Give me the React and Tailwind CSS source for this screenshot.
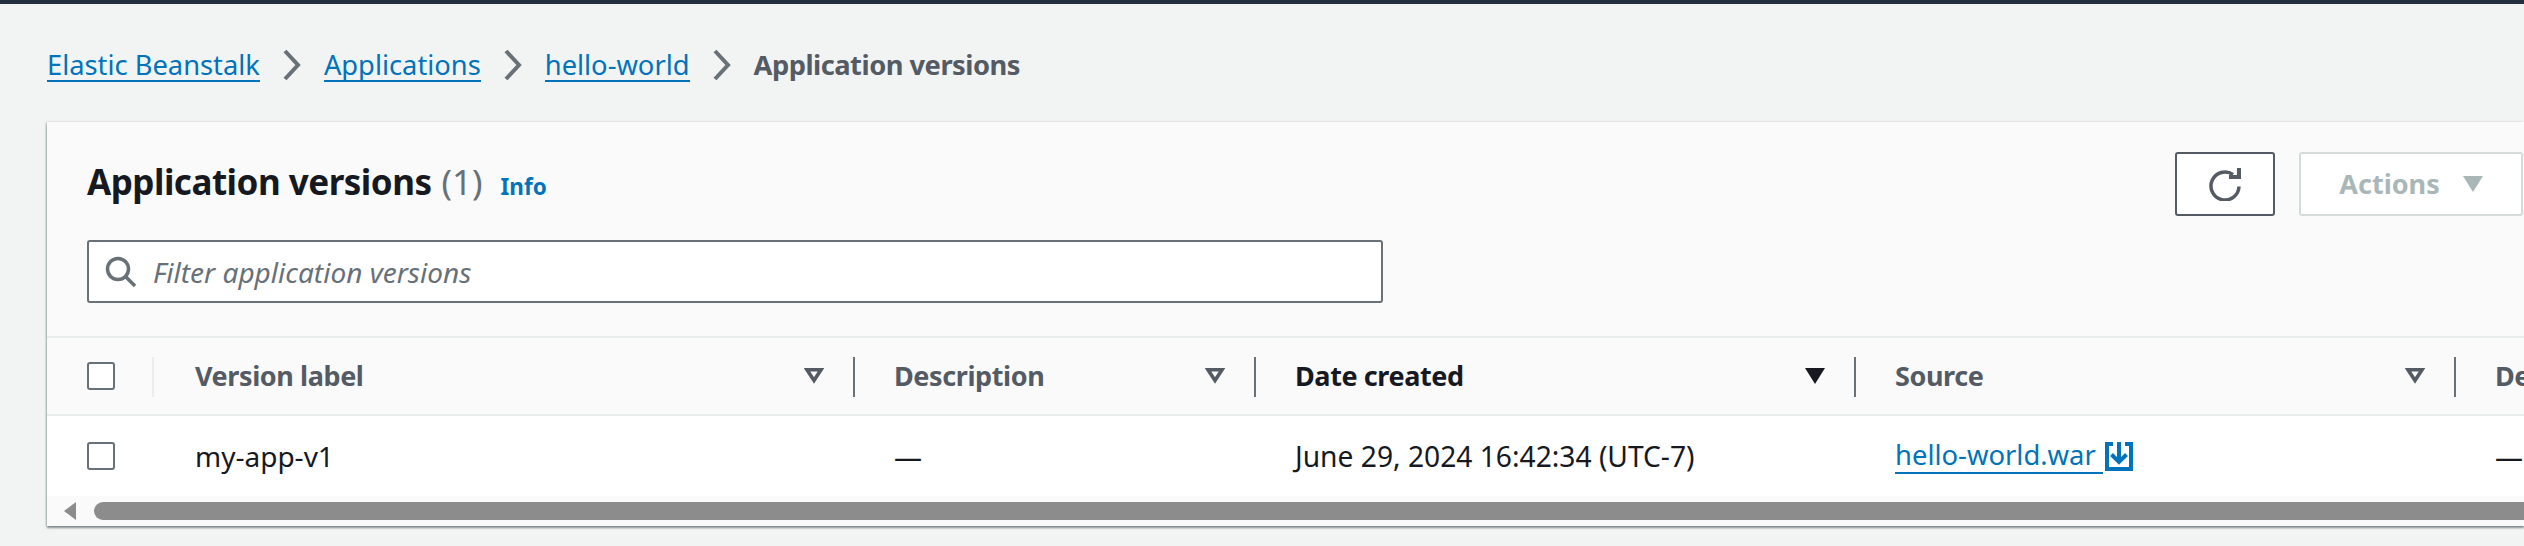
import React from 'react';

const FONT = 'font-["Noto_Sans",sans-serif]';

function Chevron() {
  return (
    <svg width="20" height="32" viewBox="0 0 20 32" fill="none" className="shrink-0">
      <path d="M3 2l13 14L3 30" stroke="#687078" strokeWidth="4" />
    </svg>
  );
}

function Crumb({ children }) {
  return (
    <a className="text-[#0073bb] border-b-2 border-[#0073bb] leading-[31px] h-[33px] block">{children}</a>
  );
}

function FilterIcon({ active }) {
  return (
    <svg width="20" height="16" viewBox="0 0 20 16" className="shrink-0">
      {active ? (
        <path d="M0 0h20L10 16z" fill="#16191f" />
      ) : (
        <path d="M3 1.8h14L10 12.5z" fill="none" stroke="#545b64" strokeWidth="3.6" />
      )}
    </svg>
  );
}

function Checkbox() {
  return <div className="w-[28px] h-[28px] rounded-[3px] border-2 border-[#687078] bg-white" />;
}

function HeadCell({ label, active }) {
  return (
    <div className="relative flex items-center h-full pl-[41px] pr-[29px] justify-between">
      <div className="absolute left-0 top-[19px] h-[40px] w-[2px] bg-[#687078]" />
      <span className={`font-bold text-[27px] tracking-[-0.4px] whitespace-nowrap ${active ? 'text-[#16191f]' : 'text-[#545b64]'}`}>{label}</span>
      <FilterIcon active={active} />
    </div>
  );
}

export default function App() {
  return (
    <div className={`w-[2524px] h-[546px] overflow-hidden bg-[#f2f3f3] border-t-4 border-[#232f3e] ${FONT}`}>
      {/* Breadcrumbs */}
      <nav className="h-[118px] pl-[47px] pt-[45px] flex items-start gap-[22px] text-[27.3px]">
        <Crumb>Elastic Beanstalk</Crumb>
        <Chevron />
        <Crumb>Applications</Crumb>
        <Chevron />
        <Crumb>hello-world</Crumb>
        <Chevron />
        <span className="text-[#545b64] font-bold tracking-[-0.5px] leading-[31px]">Application versions</span>
      </nav>

      <div className="ml-[47px] h-[404px] bg-[#fafafa] shadow-[0_2px_2px_rgba(0,28,36,0.45),-1px_0_2px_rgba(0,28,36,0.2)] overflow-hidden">
        {/* Header */}
        <div className="h-[214px] pl-[40px] relative">
          <div className="flex items-start justify-between pt-[30px] pr-[1px]">
            <div className="flex items-baseline gap-[10px] pt-[8px]">
              <h1 className="text-[35px] font-bold tracking-[-0.5px] text-[#16191f] leading-[44px]">Application versions</h1>
              <span className="text-[35px] text-[#687078] leading-[44px]">(1)</span>
              <a className="ml-[8px] text-[22.5px] font-bold text-[#0073bb]">Info</a>
            </div>
            <div className="flex gap-[24px]">
              <button className="w-[100px] h-[64px] rounded-[3px] border-2 border-[#545b64] bg-white flex items-center justify-center">
                <svg width="32" height="33" viewBox="0 0 32 33" fill="none">
                  <path d="M24 6.5A14 14 0 1 0 30 18.5" stroke="#545b64" strokeWidth="3.5" />
                  <path d="M28 0h4v11H20V7h8z" fill="#545b64" />
                </svg>
              </button>
              <button className="w-[224px] h-[64px] rounded-[3px] border-2 border-[#d5dbdb] bg-white flex items-center justify-center gap-[23px] text-[27px] font-bold text-[#aab7b8]">
                Actions
                <svg width="20" height="16" viewBox="0 0 20 16"><path d="M0 0h20L10 16z" fill="#aab7b8" /></svg>
              </button>
            </div>
          </div>
          <div className="mt-[24px] w-[1296px] h-[63px] rounded-[3px] border-2 border-[#687078] bg-white flex items-center pl-[16px] gap-[16px]">
            <svg width="32" height="32" viewBox="0 0 32 32" fill="none">
              <circle cx="13" cy="13" r="10.5" stroke="#687078" strokeWidth="3.5" />
              <path d="M20.5 20.5L30 30" stroke="#687078" strokeWidth="3.5" />
            </svg>
            <span className="italic text-[28px] text-[#687078]">Filter application versions</span>
          </div>
        </div>

        {/* Table */}
        <div className="grid grid-cols-[107px_699px_401px_600px_600px_1fr]">
          <div className="col-span-6 grid grid-cols-subgrid h-[80px] border-t-2 border-b-2 border-[#eaeded] bg-[#fafafa]">
            <div className="relative flex items-center pl-[40px]">
              <Checkbox />
              <div className="absolute right-0 top-[19px] h-[40px] w-[2px] bg-[#eaeded]" />
            </div>
            <div className="relative flex items-center h-full pl-[41px] pr-[29px] justify-between">
              <span className="font-bold text-[27px] tracking-[-0.4px] text-[#545b64]">Version label</span>
              <FilterIcon />
            </div>
            <HeadCell label="Description" />
            <HeadCell label="Date created" active />
            <HeadCell label="Source" />
            <HeadCell label="Deployed to" />
          </div>
          <div className="col-span-6 grid grid-cols-subgrid h-[80px] bg-white text-[28px] text-[#16191f] items-center">
            <div className="pl-[40px] flex"><Checkbox /></div>
            <div className="pl-[41px]">my-app-v1</div>
            <div className="pl-[41px]">—</div>
            <div className="pl-[41px] text-[28.2px]">June 29, 2024 16:42:34 (UTC-7)</div>
            <div className="pl-[41px] flex items-center">
              <a className="text-[#0073bb] text-[27.4px] border-b-2 border-[#0073bb] leading-[33px] h-[36px] whitespace-pre">hello-world.war </a>
              <svg width="28" height="29" viewBox="0 0 28 29" fill="none" className="ml-[2px]">
                <path d="M8 2H2v25h24V2h-6" stroke="#0073bb" strokeWidth="4" />
                <path d="M14 0v20M6.5 12.5L14 20l7.5-7.5" stroke="#0073bb" strokeWidth="4" />
              </svg>
            </div>
            <div className="pl-[41px]">—</div>
          </div>
        </div>

        {/* Scrollbar */}
        <div className="h-[30px] bg-[#fafafa] flex items-center pl-[16px] gap-[17px]">
          <svg width="14" height="18" viewBox="0 0 14 18" className="shrink-0"><path d="M13 0v18L1 9z" fill="#8c8c8c" /></svg>
          <div className="flex-1 h-[18px] rounded-l-[9px] bg-[#8c8c8c]" />
        </div>
      </div>
    </div>
  );
}
